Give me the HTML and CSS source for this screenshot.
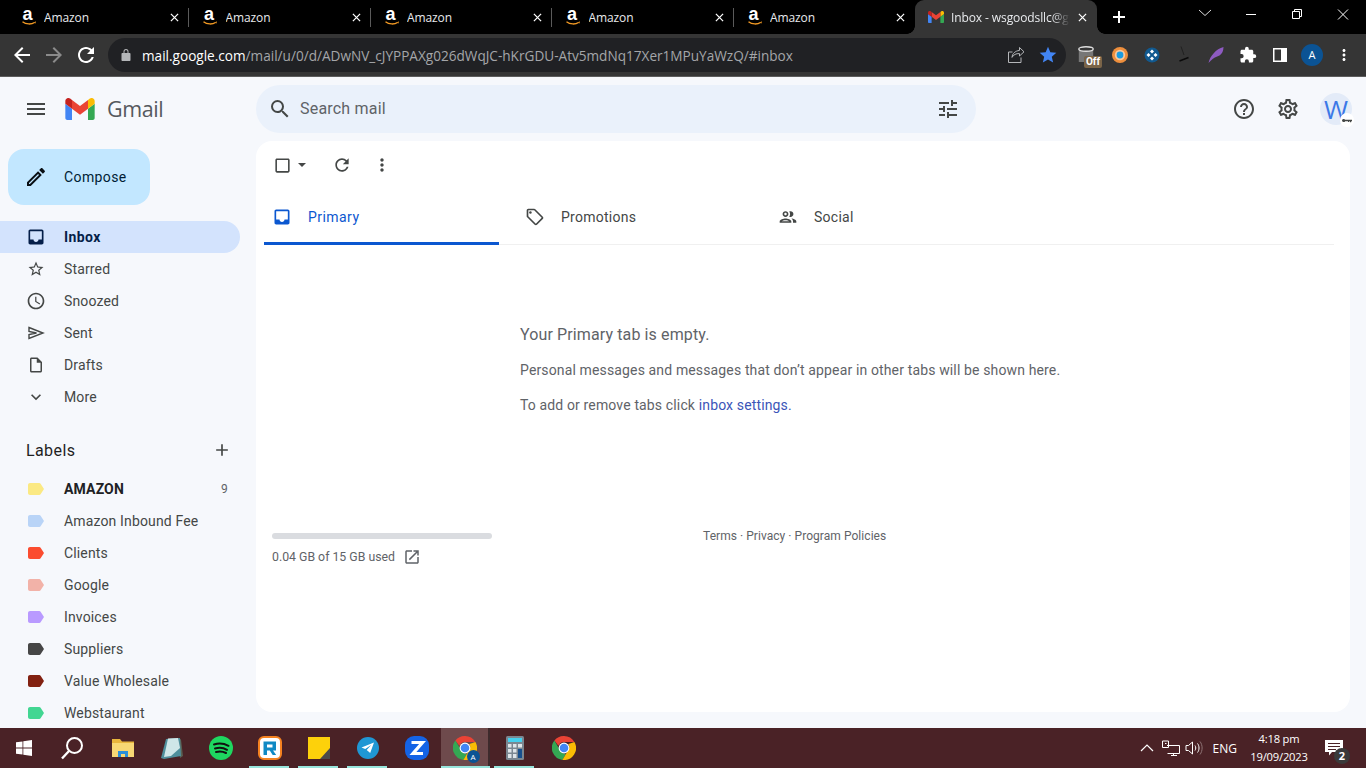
FILE: index.html
```html
<!DOCTYPE html>
<html lang="en">
<head>
<meta charset="utf-8">
<title>Inbox - Gmail</title>
<link rel="stylesheet" href="styles.css">
</head>
<body>
<svg class="sprites" aria-hidden="true">
  <symbol id="smile" viewBox="0 0 14 4">
    <path d="M.5 .8c3.600 2.800 9 2.800 12 .6" fill="none" stroke="#f39a24" stroke-width="1.300"/>
    <path d="M13.800 .2l-.2 2.200-1.800-.8z" fill="#f39a24"/>
  </symbol>
  <symbol id="x" viewBox="0 0 10 10"><path d="M1 1l8 8M9 1l-8 8" fill="none" stroke="currentColor" stroke-width="1.400"/></symbol>
  <symbol id="gm" viewBox="52 42 88 66">
    <path fill="#4285f4" d="M58 108h14V74L52 59v43c0 3.320 2.690 6 6 6"/>
    <path fill="#34a853" d="M120 108h14c3.320 0 6-2.690 6-6V59l-20 15"/>
    <path fill="#fbbc04" d="M120 48v26l20-15v-8c0-7.420-8.470-11.650-14.400-7.200"/>
    <path fill="#ea4335" d="M72 74V48l24 18 24-18v26L96 92"/>
    <path fill="#c5221f" d="M52 51v8l20 15V48l-5.600-4.200c-5.940-4.450-14.400-.22-14.400 7.200"/>
  </symbol>
  <symbol id="inbox" viewBox="0 0 24 24"><path d="M19 3H4.990c-1.110 0-1.980.89-1.980 2L3 19c0 1.100.88 2 1.990 2H19c1.100 0 2-.9 2-2V5c0-1.110-.9-2-2-2zm0 12h-4c0 1.660-1.350 3-3 3s-3-1.340-3-3H4.990V5H19v10z"/></symbol>
  <symbol id="lab" viewBox="0 0 16 12"><path d="M2 0h9.300c.5 0 1 .2 1.300.7L16 6l-3.400 5.300c-.3.5-.8.7-1.300.7H2c-1.100 0-2-.9-2-2V2C0 .9.9 0 2 0z"/></symbol>
  <symbol id="chrome" viewBox="0 0 24 24">
    <path fill="#ea4335" d="M12 0a12 12 0 0 1 10.400 6H12a6 6 0 0 0-5.600 3.800L2.400 4.600A12 12 0 0 1 12 0z"/>
    <path fill="#34a853" d="M2.400 4.600l5.200 9A6 6 0 0 0 13.900 17.700L10.400 23.900A12 12 0 0 1 2.400 4.600z"/>
    <path fill="#fbbc04" d="M22.400 6A12 12 0 0 1 10.400 23.900l5.200-9A6 6 0 0 0 16.400 8z"/>
    <circle cx="12" cy="12" r="5.400" fill="#fff"/><circle cx="12" cy="12" r="4.300" fill="#4285f4"/>
  </symbol>
</svg>

<div class="tabstrip">
  <div class="tab"><span class="amz">a<svg class="smile"><use href="#smile"/></svg></span><span class="tab-title">Amazon</span><svg class="tab-x"><use href="#x"/></svg></div>
  <div class="tab"><span class="amz">a<svg class="smile"><use href="#smile"/></svg></span><span class="tab-title">Amazon</span><svg class="tab-x"><use href="#x"/></svg></div>
  <div class="tab"><span class="amz">a<svg class="smile"><use href="#smile"/></svg></span><span class="tab-title">Amazon</span><svg class="tab-x"><use href="#x"/></svg></div>
  <div class="tab"><span class="amz">a<svg class="smile"><use href="#smile"/></svg></span><span class="tab-title">Amazon</span><svg class="tab-x"><use href="#x"/></svg></div>
  <div class="tab tab-last"><span class="amz">a<svg class="smile"><use href="#smile"/></svg></span><span class="tab-title">Amazon</span><svg class="tab-x"><use href="#x"/></svg></div>
  <div class="tab tab-active"><svg class="favicon"><use href="#gm"/></svg><span class="tab-title">Inbox - wsgoodsllc@gmail.com</span><svg class="tab-x"><use href="#x"/></svg></div>
  <svg class="newtab" viewBox="0 0 12 12"><path d="M6 0v12M0 6h12" stroke="#fff" stroke-width="2"/></svg>
  <div class="winctl">
    <svg class="win-btn" viewBox="0 0 46 20"><path d="M17 10l6 5.500L29 10" fill="none" stroke="#ddd"/></svg>
    <svg class="win-btn" viewBox="0 0 46 20"><path d="M18 14.500h10" fill="none" stroke="#fff"/></svg>
    <svg class="win-btn" viewBox="0 0 46 20"><path d="M18.500 11.500h7v7h-7zM20.500 11V9.500h7v7H26" fill="none" stroke="#fff"/></svg>
    <svg class="win-btn" viewBox="0 0 46 20"><path d="M18 9.500l10 10M28 9.500l-10 10" fill="none" stroke="#fff"/></svg>
  </div>
</div>

<div class="toolbar">
  <svg class="nav-ic" viewBox="0 0 24 24"><path fill="#fff" d="M20 11H7.830l5.590-5.590L12 4l-8 8 8 8 1.410-1.410L7.830 13H20z"/></svg>
  <svg class="nav-ic" viewBox="0 0 24 24"><path fill="#8b8b8b" d="M12 4l-1.410 1.410L16.170 11H4v2h12.170l-5.580 5.590L12 20l8-8z"/></svg>
  <svg class="nav-ic" viewBox="0 0 24 24"><path fill="#fff" d="M17.650 6.350C16.200 4.900 14.210 4 12 4c-4.420 0-7.990 3.580-7.990 8s3.570 8 7.990 8c3.730 0 6.840-2.550 7.730-6h-2.080c-.82 2.330-3.040 4-5.650 4-3.310 0-6-2.690-6-6s2.690-6 6-6c1.660 0 3.140.69 4.220 1.780L13 11h7V4l-2.350 2.350z"/></svg>
  <div class="omnibox">
    <svg class="lock" viewBox="0 0 12 14"><path fill="#b4b6b9" d="M3.500 5V3.500a2.500 2.500 0 0 1 5 0V5h1c.6 0 1 .4 1 1v6c0 .6-.4 1-1 1h-7c-.6 0-1-.4-1-1V6c0-.6.4-1 1-1zm1 0h3V3.500a1.500 1.500 0 0 0-3 0z"/></svg>
    <span class="url"><b>mail.google.com</b>/mail/u/0/d/ADwNV_cJYPPAXg026dWqJC-hKrGDU-Atv5mdNq17Xer1MPuYaWzQ/#inbox</span>
    <svg class="omni-ic" viewBox="0 0 18 18"><path d="M12.500 1.500L17 5.800l-4.500 4.200V7.600C9 7.400 6.600 8.600 5 11.400 5.300 7.600 8 5 12.500 4.400zM14 11.500v5H1.500V6h4" fill="none" stroke="#b4b6b9"/></svg>
    <svg class="omni-ic star" viewBox="0 0 24 24"><path fill="#4285f4" d="M12 17.270L18.180 21l-1.640-7.030L22 9.240l-7.190-.61L12 2 9.190 8.630 2 9.240l5.460 4.730L5.820 21z"/></svg>
  </div>
  <div class="ext ext-off">
    <svg class="off-ic" viewBox="0 0 16 18"><path d="M.8 3v13h14.400V3" fill="#777"/><ellipse cx="8" cy="3" rx="7.200" ry="2.200" fill="#353535" stroke="#ddd" stroke-width="1.400"/></svg>
    <span class="off-badge">Off</span>
  </div>
  <div class="ext"><svg class="ext-ic" viewBox="0 0 18 18"><circle cx="9" cy="9" r="8" fill="#ee8f3d"/><circle cx="9" cy="9" r="5.200" fill="#f6c9a0"/><circle cx="9" cy="9" r="3.400" fill="#1a9be0"/></svg></div>
  <div class="ext"><svg class="ext-ic" viewBox="0 0 18 18"><circle cx="9" cy="9" r="7.500" fill="#11598f"/><path d="M9 3.500l2 2-2 2-2-2zM9 10.500l2 2-2 2-2-2zM5.500 7l2 2-2 2-2-2zM12.500 7l2 2-2 2-2-2z" fill="#fff"/></svg></div>
  <div class="ext"><svg class="ext-ic" viewBox="0 0 18 18"><path d="M6 .5l3 8.500" fill="none" stroke="#1c1c1c" stroke-width=".8"/><path d="M4.500 15l9-3.500" fill="none" stroke="#0a0a0a" stroke-width="1.400"/></svg></div>
  <div class="ext"><svg class="ext-ic" viewBox="0 0 18 18"><path d="M1.500 17C3 10 9 3 16.500 1c0 4-1.500 7-4 8.500L9 11c-2 1-4.500 2.500-7.500 6z" fill="#8e5bc2"/></svg></div>
  <div class="ext"><svg class="ext-ic" viewBox="0 0 24 24"><path fill="#fff" d="M20.500 11H19V7c0-1.100-.9-2-2-2h-4V3.500a2.500 2.500 0 0 0-5 0V5H4c-1.100 0-2 .9-2 2v3.800h1.500a2.700 2.700 0 0 1 0 5.400H2V20c0 1.100.9 2 2 2h3.800v-1.500a2.700 2.700 0 0 1 5.400 0V22H17c1.100 0 2-.9 2-2v-4h1.500a2.500 2.500 0 0 0 0-5z"/></svg></div>
  <div class="ext"><svg class="ext-ic sidepanel" viewBox="0 0 14 14"><path fill="#fff" fill-rule="evenodd" d="M0 0h14v14H0zm1.500 1.500v11H8v-11z"/></svg></div>
  <div class="ext"><span class="chrome-avatar">A</span></div>
  <div class="ext"><svg class="ext-ic" viewBox="0 0 24 24"><path fill="#fff" d="M12 8c1.100 0 2-.9 2-2s-.9-2-2-2-2 .9-2 2 .9 2 2 2zm0 2c-1.100 0-2 .9-2 2s.9 2 2 2 2-.9 2-2-.9-2-2-2zm0 6c-1.100 0-2 .9-2 2s.9 2 2 2 2-.9 2-2-.9-2-2-2z"/></svg></div>
</div>

<div class="app">
  <aside class="sidebar">
    <div class="brand">
      <svg class="ic burger" viewBox="0 0 24 24"><path d="M3 18h18v-2H3v2zm0-5h18v-2H3v2zm0-7v2h18V6H3z"/></svg>
      <svg class="gmail-m"><use href="#gm"/></svg>
      <span class="gmail-word">Gmail</span>
    </div>
    <button class="compose">
      <svg class="ic" viewBox="0 0 24 24"><path fill="#0a0f14" d="M3 17.250V21h3.750L17.810 9.940l-3.750-3.750L3 17.250zM5.920 19H5v-.92l9.060-9.060.92.92L5.920 19zM20.710 5.630l-2.340-2.340c-.2-.2-.45-.29-.71-.29s-.51.1-.7.29l-1.830 1.830 3.750 3.750 1.830-1.830c.39-.39.39-1.020 0-1.410z"/></svg>
      <span>Compose</span>
    </button>
    <nav class="nav">
      <a class="nav-row active"><svg class="ic"><use href="#inbox"/></svg><span>Inbox</span></a>
      <a class="nav-row"><svg class="ic small" viewBox="0 0 24 24"><path d="M22 9.240l-7.190-.62L12 2 9.190 8.630 2 9.240l5.460 4.730L5.820 21 12 17.270 18.180 21l-1.630-7.030L22 9.240zM12 15.400l-3.760 2.270 1-4.280-3.320-2.880 4.380-.38L12 6.100l1.710 4.040 4.380.38-3.320 2.880 1 4.280L12 15.400z"/></svg><span>Starred</span></a>
      <a class="nav-row"><svg class="ic" viewBox="0 0 24 24"><path d="M11.990 2C6.470 2 2 6.480 2 12s4.470 10 9.990 10C17.520 22 22 17.520 22 12S17.520 2 11.990 2zM12 20c-4.420 0-8-3.580-8-8s3.580-8 8-8 8 3.580 8 8-3.580 8-8 8zm.5-13H11v6l5.250 3.150.75-1.230-4.500-2.670z"/></svg><span>Snoozed</span></a>
      <a class="nav-row"><svg class="ic send" viewBox="0 0 20 20"><path d="M3 4.500L17 10 3 15.500v-4l7.500-1.500L3 8.500z"/></svg><span>Sent</span></a>
      <a class="nav-row"><svg class="ic small" viewBox="0 0 24 24"><path d="M14 2H6c-1.100 0-1.990.9-1.990 2L4 20c0 1.100.89 2 1.990 2H18c1.100 0 2-.9 2-2V8l-6-6zM6 20V4h7v5h5v11H6z"/></svg><span>Drafts</span></a>
      <a class="nav-row"><svg class="ic" viewBox="0 0 24 24"><path d="M16.590 8.590L12 13.170 7.410 8.590 6 10l6 6 6-6z"/></svg><span>More</span></a>
    </nav>
    <div class="labels-head"><span>Labels</span><svg class="ic" viewBox="0 0 24 24"><path d="M19 13h-6v6h-2v-6H5v-2h6V5h2v6h6v2z"/></svg></div>
    <div class="labels">
      <a class="nav-row bold"><svg class="lab c-yellow"><use href="#lab"/></svg><span>AMAZON</span><em class="count">9</em></a>
      <a class="nav-row"><svg class="lab c-blue"><use href="#lab"/></svg><span>Amazon Inbound Fee</span></a>
      <a class="nav-row"><svg class="lab c-red"><use href="#lab"/></svg><span>Clients</span></a>
      <a class="nav-row"><svg class="lab c-pink"><use href="#lab"/></svg><span>Google</span></a>
      <a class="nav-row"><svg class="lab c-purple"><use href="#lab"/></svg><span>Invoices</span></a>
      <a class="nav-row"><svg class="lab c-grey"><use href="#lab"/></svg><span>Suppliers</span></a>
      <a class="nav-row"><svg class="lab c-brown"><use href="#lab"/></svg><span>Value Wholesale</span></a>
      <a class="nav-row"><svg class="lab c-green"><use href="#lab"/></svg><span>Webstaurant</span></a>
    </div>
  </aside>

  <div class="content">
    <header class="topbar">
      <div class="search">
        <svg class="ic search-ic" viewBox="0 0 24 24"><path d="M15.500 14h-.79l-.28-.27A6.471 6.471 0 0 0 16 9.500 6.500 6.500 0 1 0 9.500 16c1.610 0 3.090-.59 4.230-1.570l.27.28v.79l5 4.990L20.490 19l-4.990-5zm-6 0C7.010 14 5 11.990 5 9.500S7.010 5 9.500 5 14 7.010 14 9.500 11.990 14 9.500 14z"/></svg>
        <span class="search-text">Search mail</span>
        <svg class="ic tune" viewBox="0 0 24 24"><path d="M3 17v2h6v-2H3zM3 5v2h10V5H3zm10 16v-2h8v-2h-8v-2h-2v6h2zM7 9v2H3v2h4v2h2V9H7zm14 4v-2H11v2h10zm-6-4h2V7h4V5h-4V3h-2v6z"/></svg>
      </div>
      <div class="top-actions">
        <svg class="ic" viewBox="0 0 24 24"><path d="M11 18h2v-2h-2v2zm1-16C6.480 2 2 6.480 2 12s4.480 10 10 10 10-4.480 10-10S17.520 2 12 2zm0 18c-4.410 0-8-3.590-8-8s3.590-8 8-8 8 3.590 8 8-3.590 8-8 8zm0-14c-2.210 0-4 1.790-4 4h2c0-1.100.9-2 2-2s2 .9 2 2c0 2-3 1.750-3 5h2c0-2.250 3-2.500 3-5 0-2.210-1.790-4-4-4z"/></svg>
        <svg class="ic" viewBox="0 0 24 24"><path d="M19.430 12.980c.04-.32.07-.64.07-.98 0-.34-.03-.66-.07-.98l2.110-1.650c.19-.15.24-.42.12-.64l-2-3.460c-.09-.16-.26-.25-.44-.25-.06 0-.12.01-.17.03l-2.490 1c-.52-.4-1.080-.73-1.690-.98l-.38-2.650C14.460 2.180 14.250 2 14 2h-4c-.25 0-.46.18-.49.42l-.38 2.650c-.61.25-1.170.59-1.690.98l-2.490-1c-.06-.02-.12-.03-.18-.03-.17 0-.34.09-.43.25l-2 3.460c-.13.22-.07.49.12.64l2.110 1.650c-.04.32-.07.65-.07.98 0 .33.03.66.07.98l-2.110 1.650c-.19.15-.24.42-.12.64l2 3.460c.09.16.26.25.44.25.06 0 .12-.01.17-.03l2.490-1c.52.4 1.080.73 1.690.98l.38 2.650c.03.24.24.42.49.42h4c.25 0 .46-.18.49-.42l.38-2.650c.61-.25 1.170-.59 1.690-.98l2.490 1c.06.02.12.03.18.03.17 0 .34-.09.43-.25l2-3.460c.12-.22.07-.49-.12-.64l-2.110-1.650zm-1.980-1.710c.04.31.05.52.05.73 0 .21-.02.43-.05.73l-.14 1.130.89.7 1.080.84-.7 1.210-1.270-.51-1.040-.42-.9.68c-.43.32-.84.56-1.250.73l-1.060.43-.16 1.130-.2 1.350h-1.400l-.19-1.350-.16-1.130-1.060-.43c-.43-.18-.83-.41-1.230-.71l-.91-.7-1.060.43-1.270.51-.7-1.210 1.080-.84.89-.7-.14-1.130c-.03-.31-.05-.54-.05-.74s.02-.43.05-.73l.14-1.130-.89-.7-1.080-.84.7-1.210 1.270.51 1.040.42.9-.68c.43-.32.84-.56 1.250-.73l1.060-.43.16-1.130.2-1.350h1.390l.19 1.350.16 1.130 1.060.43c.43.18.83.41 1.230.71l.91.7 1.060-.43 1.270-.51.7 1.210-1.070.85-.89.7.14 1.130zM12 8c-2.210 0-4 1.790-4 4s1.790 4 4 4 4-1.790 4-4-1.790-4-4-4zm0 6c-1.100 0-2-.9-2-2s.9-2 2-2 2 .9 2 2-.9 2-2 2z"/></svg>
        <div class="avatar"><span>W</span>
          <span class="key"><svg viewBox="0 0 12 6"><path d="M0 3a2 2 0 0 1 3.800-.8H12v1.600h-1v1.400H9.500V3.800h-1v1h-1.300v-1H3.800A2 2 0 0 1 0 3z" fill="#444746"/></svg></span>
        </div>
      </div>
    </header>

    <main class="card">
      <div class="actions">
        <svg class="ic check" viewBox="0 0 24 24"><path d="M19 5v14H5V5h14m0-2H5c-1.100 0-2 .9-2 2v14c0 1.100.9 2 2 2h14c1.100 0 2-.9 2-2V5c0-1.100-.9-2-2-2z"/></svg>
        <svg class="caret" viewBox="0 0 10 5"><path d="M0 0h10L5 5z"/></svg>
        <svg class="act-ic refresh" viewBox="0 0 24 24"><path d="M17.650 6.350C16.200 4.900 14.210 4 12 4c-4.420 0-7.990 3.580-7.990 8s3.570 8 7.990 8c3.730 0 6.840-2.550 7.730-6h-2.080c-.82 2.330-3.040 4-5.650 4-3.310 0-6-2.690-6-6s2.690-6 6-6c1.660 0 3.140.69 4.220 1.780L13 11h7V4l-2.350 2.350z"/></svg>
        <svg class="act-ic more" viewBox="0 0 24 24"><path d="M12 8c1.100 0 2-.9 2-2s-.9-2-2-2-2 .9-2 2 .9 2 2 2zm0 2c-1.100 0-2 .9-2 2s.9 2 2 2 2-.9 2-2-.9-2-2-2zm0 6c-1.100 0-2 .9-2 2s.9 2 2 2 2-.9 2-2-.9-2-2-2z"/></svg>
      </div>
      <div class="mailtabs">
        <div class="mailtab selected"><svg class="ic"><use href="#inbox"/></svg><span>Primary</span></div>
        <div class="mailtab"><svg class="ic" viewBox="0 0 24 24"><path d="M21.410 11.580l-9-9C12.050 2.220 11.550 2 11 2H4c-1.100 0-2 .9-2 2v7c0 .55.22 1.050.59 1.420l9 9c.36.36.86.58 1.410.58s1.050-.22 1.410-.59l7-7c.37-.36.59-.86.59-1.410s-.23-1.060-.59-1.420zM13 20.010L4 11V4h7v-.01l9 9-7 7.020z"/><circle cx="6.500" cy="6.500" r="1.500"/></svg><span>Promotions</span></div>
        <div class="mailtab"><svg class="ic" viewBox="0 0 24 24"><path d="M9 13.750c-2.340 0-7 1.170-7 3.500V19h14v-1.750c0-2.330-4.660-3.500-7-3.500zM4.340 17c.84-.58 2.870-1.250 4.660-1.250s3.820.67 4.660 1.250H4.340zM9 12c1.930 0 3.500-1.570 3.500-3.500S10.930 5 9 5 5.500 6.570 5.500 8.500 7.070 12 9 12zm0-5c.83 0 1.500.67 1.500 1.500S9.830 10 9 10s-1.500-.67-1.500-1.500S8.170 7 9 7zm7.040 6.810c1.160.84 1.960 1.960 1.960 3.440V19h4v-1.750c0-2.020-3.500-3.170-5.960-3.440zM15 12c1.930 0 3.500-1.570 3.500-3.500S16.930 5 15 5c-.54 0-1.040.13-1.500.35.63.89 1 1.980 1 3.150s-.37 2.260-1 3.150c.46.22.96.35 1.500.35z"/></svg><span>Social</span></div>
      </div>
      <section class="empty">
        <h2>Your Primary tab is empty.</h2>
        <p>Personal messages and messages that don’t appear in other tabs will be shown here.</p>
        <p>To add or remove tabs click <a>inbox settings.</a></p>
      </section>
      <footer class="foot">
        <div class="storage">
          <div class="bar"></div>
          <div class="used"><span>0.04 GB of 15 GB used</span><svg class="ic" viewBox="0 0 24 24"><path d="M19 19H5V5h7V3H5c-1.110 0-2 .9-2 2v14c0 1.100.89 2 2 2h14c1.100 0 2-.9 2-2v-7h-2v7zM14 3v2h3.590l-9.830 9.830 1.410 1.410L19 6.410V10h2V3h-7z"/></svg></div>
        </div>
        <div class="terms">Terms · Privacy · Program Policies</div>
      </footer>
    </main>
  </div>
</div>

<div class="taskbar">
  <div class="task start"><svg class="t-ic" viewBox="0 0 16 16"><path fill="#fff" d="M0 2.300l6.500-.9v6.200H0zM7.300 1.300L16 0v7.600H7.300zM0 8.400h6.500v6.200L0 13.700zM7.300 8.400H16V16l-8.700-1.200z"/></svg></div>
  <div class="task start"><svg class="t-ic big" viewBox="0 0 24 24"><circle cx="14.500" cy="9.500" r="7.500" fill="none" stroke="#fff" stroke-width="2"/><path d="M9 15l-7 7.500" stroke="#fff" stroke-width="2.400"/></svg></div>
  <div class="task gap"><svg class="t-ic big" viewBox="0 0 24 24"><path fill="#e8b53c" d="M1 3h8l2 2.500h12V21H1z"/><path fill="#f7d774" d="M1 7h22v14H1z"/><path fill="#2b8fd8" d="M7 21v-6h10v6h-3v-3h-4v3z"/></svg></div>
  <div class="task"><svg class="t-ic big" viewBox="0 0 24 24"><path fill="#5a5f52" d="M18 2l3 1.500L23 20l-3 2z"/><path fill="#4f8f9c" d="M6 3l14-1 1 18-17 3-3-1z"/><path fill="#cfe6e8" d="M8 2.500l10-.5 2 10-9 8-7 1z"/></svg></div>
  <div class="task"><svg class="t-ic big" viewBox="0 0 24 24"><circle cx="12" cy="12" r="12" fill="#1ed760"/><path d="M5 8.500c5-1.500 10-1 14.500 1.300M6 12.500c4.200-1.200 8.500-.8 12 1.300M7 16c3.500-.9 7-.6 10 1" fill="none" stroke="#111" stroke-width="2" stroke-linecap="round"/></svg></div>
  <div class="task run"><svg class="t-ic big" viewBox="0 0 24 24"><rect x="1" y="1" width="22" height="22" rx="5" fill="#fff" stroke="#f58220" stroke-width="2"/><path fill-rule="evenodd" fill="#1089c4" d="M5.500 5.500h12.500v9h-3l3.200 4.500h-3.500L11.800 14.500H9V19H5.500zM9 8.500V11.500h5.500v-3z"/></svg></div>
  <div class="task run"><svg class="t-ic big" viewBox="0 0 24 24"><path fill="#fdd10b" d="M1 1h22v22H1z"/><path fill="#4a4a4a" d="M13 23l10-11v11z"/></svg></div>
  <div class="task run"><svg class="t-ic big" viewBox="0 0 24 24"><circle cx="12" cy="12" r="11" fill="#1f97d4"/><path fill="#fff" d="M18 6.500L5.500 11.500l3.700 1.400 6-4-4.500 5 3.500 3.100z"/></svg></div>
  <div class="task"><svg class="t-ic big" viewBox="0 0 24 24"><rect width="24" height="24" rx="9" fill="#1463e6"/><path d="M6.500 6.500h11L8 17.500h10" fill="none" stroke="#fff" stroke-width="3.200"/></svg></div>
  <div class="task run active-app"><span class="chrome-wrap"><svg class="t-ic big"><use href="#chrome"/></svg><span class="profile-dot">A</span></span></div>
  <div class="task run"><svg class="t-ic big" viewBox="0 0 18 24"><rect width="18" height="24" rx="1.500" fill="#7b8791"/><path fill="#46d0ee" d="M2 2h14v4H2z"/><path fill="#dfe5e9" d="M2 8h3.500v3.500H2zM7 8h3.500v3.500H7zM12 8h4v3.500h-4zM2 13h3.500v3.500H2zM7 13h3.500v3.500H7zM2 18h3.500v4H2zM7 18h3.500v4H7z"/><path fill="#17508e" d="M12 13h4v9h-4z"/></svg></div>
  <div class="task"><svg class="t-ic big"><use href="#chrome"/></svg></div>
  <div class="tray">
    <svg class="tray-ic" viewBox="0 0 14 14"><path d="M1 10l6-6 6 6" fill="none" stroke="#fff" stroke-width="1.200"/></svg>
    <svg class="tray-ic net" viewBox="0 0 18 16"><path d="M5 5.500h12.500v8h-12M.5 1h6v6.500h-6zM3 3.500h1.500M9 15.500h6M11.500 13.500v2" fill="none" stroke="#fff"/></svg>
    <svg class="tray-ic vol" viewBox="0 0 18 16"><path d="M1 5.500h2.500L7.500 2v12l-4-3.500H1zM10 5.500c1 1.500 1 3.500 0 5M12.500 3.500c2 2.500 2 6.500 0 9" fill="none" stroke="#fff"/><path d="M15 1.500c2.800 3.500 2.800 9.500 0 13" fill="none" stroke="#8d7173"/></svg>
    <span class="lang">ENG</span>
    <div class="clock"><span>4:18 pm</span><span>19/09/2023</span></div>
    <div class="notif">
      <svg viewBox="0 0 18 16"><path fill="#fff" d="M0 0h18v12H7l-3 3.500V12H0z"/><path stroke="#4a2226" d="M3 3.500h12M3 6.500h12M3 9.500h8"/></svg>
      <span class="notif-n">2</span>
    </div>
  </div>
</div>
</body>
</html>
```

FILE: styles.css
```css
* { box-sizing: border-box; }
html, body { margin: 0; height: 768px; overflow: hidden; }
body { display: flex; flex-direction: column; width: 1366px; font-family: Roboto, "Liberation Sans", sans-serif; background: #f6f8fc; }
.sprites { position: absolute; width: 0; height: 0; }
svg { display: block; flex: none; }

/* Chrome */
.tabstrip { height: 34px; background: #000; display: flex; padding-left: 7.5px; flex: none; }
.tab { width: 181.5px; height: 34px; display: flex; align-items: center; padding: 0 0 0 14px; color: #e8eaed; position: relative; font: 12px "Open Sans", sans-serif; }
.tab::after { content: ""; position: absolute; right: 0; top: 8px; height: 19px; width: 1px; background: #5a5a5a; }
.tab-last::after { display: none; }
.amz { width: 16px; height: 16px; margin-right: 6.5px; padding-left: 1px; position: relative; color: #fff; font: 700 18px/10px "Liberation Sans", sans-serif; flex: none; }
.smile { position: absolute; left: 0; top: 12px; width: 14px; height: 4px; }
.favicon { width: 16px; height: 16px; margin-right: 7px; }
.tab-title { flex: 1; white-space: nowrap; overflow: hidden; letter-spacing: -.1px; }
.tab-x { width: 9px; height: 9px; margin: 0 10px 0 8px; color: #fff; }
.tab-active { background: #353535; border-radius: 9px 9px 0 0; padding-left: 13px; }
.tab-active::before, .tab-active::after { content: ""; position: absolute; bottom: 0; top: auto; width: 8px; height: 8px; }
.tab-active::before { left: -8px; background: radial-gradient(circle at 0 0, #000 7.5px, #353535 8px); }
.tab-active::after { right: -8px; background: radial-gradient(circle at 100% 0, #000 7.5px, #353535 8px); }
.tab-active .tab-title { -webkit-mask-image: linear-gradient(90deg, #000 85%, transparent); mask-image: linear-gradient(90deg, #000 85%, transparent); }
.newtab { width: 12px; height: 12px; margin: 11px 0 0 16px; }
.winctl { margin-left: auto; display: flex; }
.win-btn { width: 46px; height: 20px; }

.toolbar { height: 43px; background: #353535; border-bottom: 1px solid #5c5c5c; display: flex; align-items: center; flex: none; padding: 0 0 0 10px; }
.nav-ic { width: 24px; height: 24px; margin-right: 8px; }
.omnibox { margin-left: 2px; width: 958px; height: 34px; border-radius: 17px; background: #202124; display: flex; align-items: center; padding-left: 12px; margin-right: 8px; }
.lock { width: 12px; height: 14px; margin-right: 10px; }
.url { flex: 1; color: #a4a6a9; font: 13.6px "Open Sans", sans-serif; white-space: nowrap; }
.url b { color: #fff; font-weight: 400; }
.omni-ic { width: 18px; height: 18px; margin-right: 13px; }
.omni-ic.star { width: 20px; height: 20px; margin-right: 8px; }
.ext { width: 32px; height: 32px; display: flex; align-items: center; justify-content: center; position: relative; }
.ext-ic { width: 18px; height: 18px; }
.ext-off { margin: 0 -3px 0 1px; }
.off-ic { width: 16px; height: 18px; margin-right: 10px; }
.off-badge { position: absolute; left: 9px; top: 17px; width: 18px; height: 12px; background: #7a6448; color: #fff; border-radius: 2px; font: 700 10px/12px Roboto, sans-serif; text-align: center; }
.sidepanel { width: 14px; height: 14px; }
.chrome-avatar { width: 22px; height: 22px; border-radius: 50%; background: #0b5394; color: #fff; font: 11px/22px "Open Sans", sans-serif; text-align: center; }

/* Gmail */
.app { height: 651px; flex: none; display: flex; overflow: hidden; background: #f6f8fc; }
.sidebar { width: 256px; flex: none; color: #444746; font-size: 14px; }
.brand { height: 64px; display: flex; align-items: center; padding-left: 24px; }
.ic { width: 24px; height: 24px; fill: #444746; }
.burger { margin-right: 17px; }
.gmail-m { width: 30px; height: 22px; margin-right: 12px; }
.gmail-word { font: 21.5px/22px "Open Sans", sans-serif; color: #55595e; letter-spacing: -.4px; margin-top: -1px; }
.compose { margin: 8px 0 16px 8px; width: 142px; height: 56px; border: 0; border-radius: 16px; background: #c2e7ff; display: flex; align-items: center; padding: 0 0 0 16px; gap: 16px; color: #001d35; font: 400 14px Roboto, sans-serif; letter-spacing: .4px; }
.nav-row { height: 32px; width: 240px; display: flex; align-items: center; padding: 0 16px 0 26px; border-radius: 0 16px 16px 0; letter-spacing: .15px; }
.nav-row .ic { width: 20px; height: 20px; margin-right: 18px; }
.nav-row .ic.small { width: 18px; height: 18px; margin: 0 19px 0 1px; }
.nav-row .ic.send { fill: none; stroke: #444746; stroke-width: 1.4px; }
.nav-row.active { background: #d3e3fd; color: #041e49; font-weight: 700; letter-spacing: .4px; }
.nav-row.active .ic { fill: #041e49; }
.labels-head { height: 32px; margin-top: 21px; padding-right: 24px; padding-left: 26px; display: flex; align-items: center; justify-content: space-between; color: #1f1f1f; font-size: 16px; letter-spacing: .4px; }
.labels-head .ic { width: 20px; height: 20px; }
.labels { margin-top: 7px; }
.lab { width: 16px; height: 12px; margin: 0 20px 0 2px; }
.bold { font-weight: 700; color: #202124; }
.count { margin: 0 -4px 0 auto; font: 12px Roboto, sans-serif; color: #5f6368; }
.c-yellow { fill: #fbe983; } .c-blue { fill: #b9d4f7; } .c-red { fill: #fb4c2f; } .c-pink { fill: #f2b2a8; }
.c-purple { fill: #b99aff; } .c-grey { fill: #464646; } .c-brown { fill: #822111; } .c-green { fill: #42d692; }

.content { flex: 1; display: flex; flex-direction: column; min-width: 0; padding-right: 16px; }
.topbar { height: 64px; display: flex; align-items: center; justify-content: space-between; flex: none; }
.search { width: 720px; height: 48px; margin-top: -1px; border-radius: 24px; background: #eaf1fb; display: flex; align-items: center; padding: 0 16px 0 12px; }
.search-text { flex: 1; margin: -1px 0 0 8px; font-size: 16px; color: #5f6368; letter-spacing: .2px; }
.top-actions { display: flex; align-items: center; gap: 20px; }
.avatar { width: 32px; height: 32px; border-radius: 50%; background: #e3ebf8; color: #3b78e7; font: 26px/32px "Open Sans", sans-serif; text-align: center; position: relative; margin-right: -2px; }
.key { position: absolute; right: -2px; bottom: -2px; width: 14px; height: 14px; border-radius: 50%; background: #fff; padding: 5px 2px; display: block; }
.key svg { width: 10px; height: 5px; }

.card { height: 571px; background: #fff; border-radius: 16px; display: flex; flex-direction: column; padding: 0 16px 0 8px; flex: none; }
.actions { height: 48px; display: flex; align-items: center; padding-left: 8.5px; flex: none; }
.check { width: 19px; height: 19px; fill: #444746; }
.caret { width: 8px; height: 4px; margin-left: 6.5px; fill: #444746; }
.act-ic { width: 20px; height: 20px; fill: #444746; }
.refresh { margin-left: 26px; }
.more { margin-left: 20px; }
.mailtabs { height: 56px; display: flex; gap: 18px; border-bottom: 1px solid #f0f0f0; flex: none; }
.mailtab { width: 235px; height: 56px; padding-left: 8px; display: flex; align-items: center; gap: 16px; color: #444746; font-size: 14px; letter-spacing: .25px; }
.mailtab .ic { width: 20px; height: 20px; }
.mailtab.selected { color: #0b57d0; border-bottom: 3px solid #0b57d0; padding-top: 3px; letter-spacing: .45px; }
.mailtab.selected .ic { fill: #0b57d0; }
.empty { margin-left: 256px; padding-top: 78px; color: #5f6368; font-size: 14px; flex: none; letter-spacing: .14px; }
.empty h2 { margin: 0 0 13px; font: 400 16px/24px Roboto, sans-serif; letter-spacing: .12px; }
.empty p { margin: 0 0 15px; line-height: 20px; }
.empty a { color: #3b55b8; }
.foot { margin-top: 103px; display: flex; flex: none; color: #5f6368; }
.storage { width: 220px; margin-left: 8px; }
.bar { height: 6px; border-radius: 3px; background: #dadce0; }
.used { display: flex; align-items: center; gap: 8px; margin-top: 9px; font-size: 12.3px; }
.used .ic { width: 18px; height: 18px; fill: #5f6368; }
.terms { margin-left: 211px; margin-top: -5px; font-size: 12px; line-height: 16px; letter-spacing: .05px; }

/* Taskbar */
.taskbar { height: 40px; flex: none; background: #4a2226; display: flex; align-items: stretch; color: #fff; }
.task { width: 49px; display: flex; align-items: center; justify-content: center; position: relative; }
.start { width: 48px; }
.gap { margin-left: 2px; }
.run::after { content: ""; position: absolute; left: 4px; right: 5px; bottom: 0; height: 2px; background: #97e5dc; }
.t-ic { width: 16px; height: 16px; }
.t-ic.big { width: 24px; height: 24px; }
.active-app { background: #6e4a4c; border-right: 2px solid #3e2a2c; }
.active-app::after { left: 0; right: -2px; }
.chrome-wrap { position: relative; display: block; }
.profile-dot { position: absolute; right: -3px; bottom: -3px; width: 13px; height: 13px; border-radius: 50%; background: #0b5394; color: #fff; font: 8px/13px "Open Sans", sans-serif; text-align: center; }
.tray { margin-left: auto; display: flex; align-items: center; font: 12px "Open Sans", sans-serif; }
.tray-ic { width: 14px; height: 14px; margin-right: 8px; }
.net { width: 18px; height: 16px; margin-right: 5px; }
.vol { width: 18px; height: 16px; margin-right: 10px; }
.clock { display: flex; flex-direction: column; align-items: center; width: 86px; padding-right: 2px; font-size: 11.2px; letter-spacing: -.2px; line-height: 18px; }
.notif { width: 43px; position: relative; }
.notif svg { width: 18px; height: 16px; margin-left: 2px; }
.notif-n { position: absolute; left: 11px; top: 8px; width: 16px; height: 16px; border-radius: 50%; background: #3a3a3a; color: #fff; font: 700 11px/16px "Open Sans", sans-serif; text-align: center; }
```
